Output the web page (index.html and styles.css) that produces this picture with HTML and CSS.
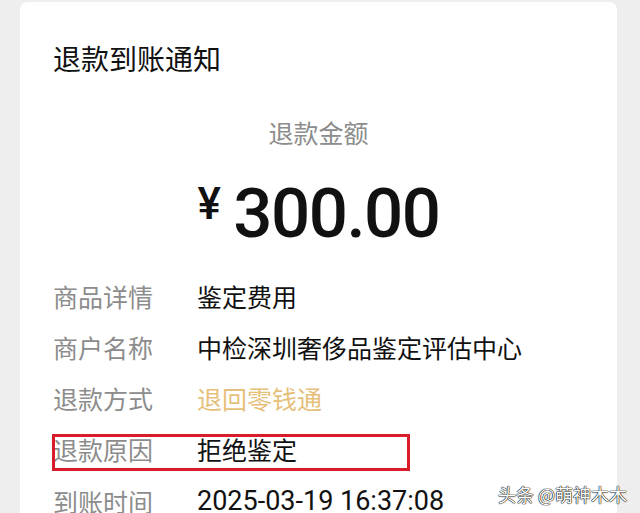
FILE: index.html
```html
<!DOCTYPE html>
<html lang="zh-CN">
<head>
    <meta charset="UTF-8">
    <meta name="viewport" content="width=device-width, initial-scale=1.0">
    <title>退款到账通知</title>
    <link rel="stylesheet" href="styles.css">
</head>
<body>

    <div class="notice-card">
        <h1 class="notice-title">退款到账通知</h1>

        <div class="amount-block">
            <p class="amount-label">退款金额</p>
            <p class="amount-value"><span class="currency">¥</span>300.00</p>
        </div>

        <div class="detail-list">
            <div class="detail-row">
                <span class="detail-label">商品详情</span>
                <span class="detail-value">鉴定费用</span>
            </div>
            <div class="detail-row">
                <span class="detail-label">商户名称</span>
                <span class="detail-value">中检深圳奢侈品鉴定评估中心</span>
            </div>
            <div class="detail-row">
                <span class="detail-label">退款方式</span>
                <span class="detail-value link">退回零钱通</span>
            </div>
            <div class="detail-row marked">
                <span class="detail-label">退款原因</span>
                <span class="detail-value">拒绝鉴定</span>
            </div>
            <div class="detail-row">
                <span class="detail-label">到账时间</span>
                <span class="detail-value">2025-03-19 16:37:08</span>
            </div>
        </div>
    </div>

    <div class="watermark">头条 @萌神木木</div>

</body>
</html>
```

FILE: styles.css
```css
:root {
    --page-bg: #eeeeee;
    --card-bg: #ffffff;
    --text: #111111;
    --text-light: #8c8c8c;
    --gold: #e6c07a;
    --mark: #d91c2a;
}

* {
    box-sizing: border-box;
    margin: 0;
    padding: 0;
}

body {
    font-family: Roboto, "Noto Sans CJK SC", sans-serif;
    background-color: var(--page-bg);
    color: var(--text);
    height: 513px;
    overflow: hidden;
    position: relative;
}

.notice-card {
    background-color: var(--card-bg);
    margin: 2px 23px 0 20px;
    border-radius: 8px 8px 0 0;
    padding: 36px 0 0 33px;
    height: 520px;
}

.notice-title {
    font-family: "Noto Sans CJK SC", sans-serif;
    font-size: 28px;
    font-weight: 400;
    line-height: 40px;
}

.amount-block {
    margin-top: 36px;
    margin-left: -33px;
    text-align: center;
}

.amount-label {
    font-family: "Noto Sans CJK SC", sans-serif;
    font-size: 25px;
    line-height: 36px;
    color: var(--text-light);
}

.amount-value {
    margin-top: 14px;
    font-size: 69px;
    font-weight: 500;
    line-height: 80px;
    letter-spacing: -1.5px;
}

.currency {
    font-size: 44px;
    font-weight: 500;
    vertical-align: 18px;
    margin-right: 14px;
}

.detail-list {
    margin-top: 16px;
}

.detail-row {
    display: flex;
    align-items: center;
    height: 51.25px;
    font-size: 25px;
    position: relative;
}

.detail-label {
    width: 144px;
    flex-shrink: 0;
    color: var(--text-light);
    font-family: "Noto Sans CJK SC", sans-serif;
}

.detail-value {
    color: var(--text);
}

.detail-value.link {
    color: var(--gold);
}

.detail-row:last-child .detail-value {
    font-size: 27px;
    line-height: 30px;
}

.marked::after {
    content: '';
    position: absolute;
    left: -1px;
    top: 10px;
    width: 352px;
    height: 31px;
    border: 3px solid var(--mark);
}

.watermark {
    position: absolute;
    right: 13px;
    bottom: 6px;
    font-family: "Noto Sans CJK SC", sans-serif;
    font-size: 18px;
    color: #ffffff;
    text-shadow: 0 0 1px #000, 0 0 1px #000, 0 0 1px #000;
}
```
